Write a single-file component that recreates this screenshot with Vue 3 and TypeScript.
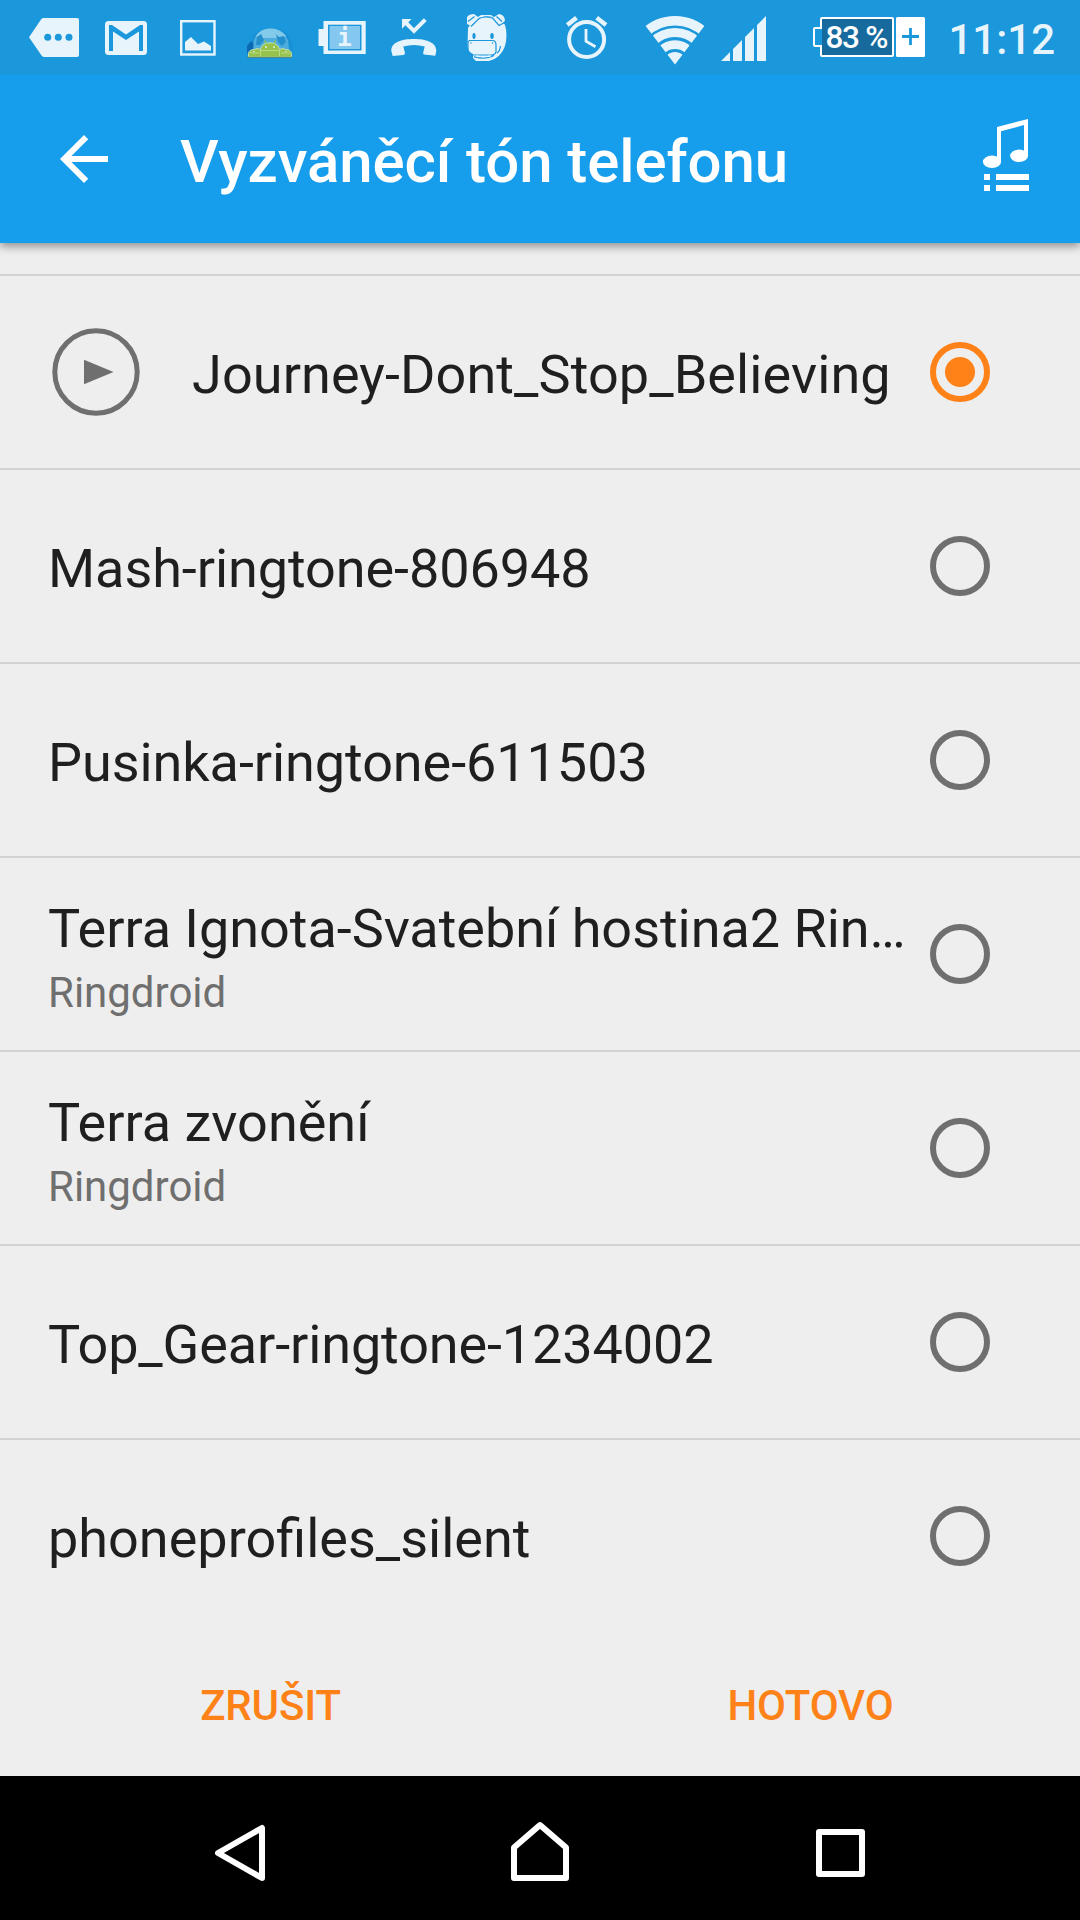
<script setup lang="ts">
import { ref } from 'vue'

interface Ringtone {
  title: string
  artist?: string
  tracking: number
}

const ringtones: Ringtone[] = [
  { title: 'Journey-Dont_Stop_Believing', tracking: 0.09 },
  { title: 'Mash-ringtone-806948', tracking: -0.07 },
  { title: 'Pusinka-ringtone-611503', tracking: -0.07 },
  { title: 'Terra Ignota-Svatební hostina2 Rin…', artist: 'Ringdroid', tracking: -0.04 },
  { title: 'Terra zvonění', artist: 'Ringdroid', tracking: 0 },
  { title: 'Top_Gear-ringtone-1234002', tracking: -0.12 },
  { title: 'phoneprofiles_silent', tracking: 0 },
]

const selected = ref(0)
</script>

<template>
  <div class="screen">
    <div class="status">
      <div class="tray">
        <svg width="72" height="75" viewBox="20 0 72 75">
          <path class="ink" d="M29 37.3 41 19.4Q42 18 44 18H77Q79 18 79 20V55Q79 57 77 57H44Q42.500 57 41.500 55.600Z" />
          <g class="bg"><circle cx="47.700" cy="37.300" r="3.500" /><circle cx="58.300" cy="37.300" r="3.500" /><circle cx="69" cy="37.300" r="3.500" /></g>
        </svg>
        <svg width="68" height="75" viewBox="92 0 68 75">
          <rect class="ink" x="105" y="21" width="42" height="34" rx="3.500" />
          <path class="bg" d="M109 51V25H112L126 34.500 140 25H143V51H139V31.500L126 40 113 31.500V51Z" />
        </svg>
        <svg width="75" height="75" viewBox="160 0 75 75">
          <rect class="line" x="181.200" y="21.200" width="33.300" height="33.300" stroke-width="2.400" />
          <path class="ink" d="M185 50.500V42L191 37 198 44 204 41.500 211 46V50.500Z" />
        </svg>
        <svg width="70" height="75" viewBox="235 0 70 75">
          <path d="M247 56V46L252 40 254 34 260 31H283L289 36 293 44V56Z" fill="#1787cb" opacity="0.45" />
          <path d="M247 53V46L251 41 256 47 250 54Z" fill="#0b69b3" />
          <path d="M254 40Q258 28.500 270.500 28.500T288 40L289 50H253Z" fill="#4dadde" />
          <path d="M256 36Q261 28.500 270.500 28.500T286 36L283 38H259Z" fill="#83caea" />
          <path d="M257 37 261 34 264 40 260 45H256ZM276 34 279 37 284 36 286 42 282 46 278 42Z" fill="#238fcd" />
          <path d="M248.500 57V53.500Q249 49.500 254.500 49.500 257 47.500 260.500 49.500 262 42.800 270 42.800T279.500 49.500Q283 47.500 285.500 49.500 291 49.500 291.500 53.500V57Z" fill="#96c34d" stroke="#cfe5b3" stroke-width="0.900" />
          <path d="M260.500 57V50M279.500 57V50M261 50.500H279M250 53H259M281 53H290" fill="none" stroke="#c5df95" stroke-width="0.800" />
          <path d="M264.500 40.500 266.300 43.500M275.700 40.500 273.900 43.500" stroke="#96c34d" stroke-width="1.300" />
          <g fill="#edf6df"><circle cx="266" cy="47" r="0.900" /><circle cx="274" cy="47" r="0.900" /><circle cx="254" cy="51.500" r="0.700" /><circle cx="286" cy="51.500" r="0.700" /></g>
          <path d="M247 57.300H292" stroke="#4d7d61" stroke-width="1" />
        </svg>
        <svg width="75" height="75" viewBox="305 0 75 75">
          <path class="ink" d="M323.500 21H365.700V54H323.500V46H318.500V29H323.500Z" />
          <rect class="bg" x="328" y="24.700" width="33.500" height="25.800" />
          <rect x="329.500" y="26" width="30.500" height="23" fill="#84c7ef" />
          <text class="info" x="344.500" y="45.800" text-anchor="middle">i</text>
        </svg>
        <svg width="70" height="75" viewBox="380 0 70 75">
          <path class="line" d="M405 22 414 31 425.300 19.700" stroke-width="4" />
          <path class="ink" d="M402 19H411.500L402 28.700Z" />
          <path class="ink" d="M391.300 51C391 42 402 39 413.800 39S436.500 42 436.300 51L435.300 55.800 424 54.500Q422.800 54 423.200 52.500L424.700 46.500Q414 43.500 403.300 46.500L405 53Q405 54.500 403.500 55L392.700 56Z" />
        </svg>
        <svg width="70" height="75" viewBox="450 0 70 75">
          <path class="ink" d="M468 28Q474 17 486 17 500 17 505 25 508 35 505 46 501 58 489 61H476L473 58V54Q468 52 467.500 46Z" />
          <path class="ink" d="M467 17Q469 14 474 14L478 17 481 15H491L494 17 499 14Q505 15 505 21L499 25 493 17Q486 15 479 18L471 26 467 24Z" />
          <g class="cut">
            <path d="M468 21.500 474.500 16.500M471 26.500 479 18.500Q486 15.500 493 18.500L499 25.500 505.500 22M496.500 16.500 502 21.500" />
            <path d="M469.500 40.500H493Q496 41 496 45V52Q495 55 491 55H472Q468.500 54 468 50V43Q468 41 469.500 40.500M497 53Q500 51 500.500 46M474 56.800Q486 60 494 55.500" />
          </g>
          <g class="bg"><ellipse cx="474" cy="36" rx="1.600" ry="3" /><ellipse cx="492" cy="36" rx="1.800" ry="3" /><circle cx="471" cy="43" r="0.700" /><circle cx="492.500" cy="43" r="0.700" /></g>
          <path class="ink" d="M476 55.500H479L477.500 57.500ZM482 56H485L483.500 58ZM488 55.500H491L489.500 57.500Z" />
        </svg>
      </div>
      <div class="system">
        <svg width="80" height="75" viewBox="555 0 80 75">
          <circle class="line" cx="586.600" cy="39.500" r="17.500" stroke-width="4" />
          <path class="line" d="M586 29V41.300L595.500 46.700" stroke-width="2.800" />
          <path class="line" d="M567.300 25 576.500 17.700M596.700 17.700 606 25" stroke-width="4.500" />
        </svg>
        <svg width="80" height="75" viewBox="635 0 80 75">
          <defs><clipPath id="wifi-fan"><path d="M675 64.500 637.200 15V0H712.800V15Z" /></clipPath></defs>
          <g clip-path="url(#wifi-fan)">
            <circle class="line" cx="675" cy="64" r="43.200" stroke-width="9.500" />
            <circle class="line" cx="675" cy="64" r="31.500" stroke-width="9" />
            <circle class="line" cx="675" cy="64" r="19.400" stroke-width="8.600" />
            <circle class="ink" cx="675" cy="64" r="12" />
          </g>
        </svg>
        <svg width="90" height="75" viewBox="715 0 90 75">
          <path class="ink" d="M721 61 730 52V61ZM733 61V49L742 40V61ZM745 61V37L754 28V61ZM757 61V25L766 16V61Z" />
        </svg>
        <svg width="130" height="75" viewBox="805 0 130 75">
          <path d="M822 18H892Q893 18 893 19V55Q893 56 892 56H822Q821 56 821 55V46H815Q814 46 814 45V29Q814 28 815 28H821V19Q821 18 822 18Z" fill="#1b97dc" stroke="#fff" stroke-width="2" />
          <rect x="822" y="19" width="70" height="36" fill="#166a9e" />
          <rect x="896" y="17" width="29" height="40" rx="1.500" fill="#fff" />
          <path d="M902 36.500H919M910.500 28V45" stroke="#1b97dc" stroke-width="2.800" />
          <text class="percent" x="857" y="48" text-anchor="middle" textLength="63">83 %</text>
        </svg>
        <span class="clock">11:12</span>
      </div>
    </div>

    <header class="toolbar">
      <svg class="back" width="72" height="72" viewBox="0 0 24 24">
        <path fill="#fff" d="M20 11H7.830l5.590-5.590L12 4l-8 8 8 8 1.410-1.410L7.830 13H20z" />
      </svg>
      <h1>Vyzváněcí tón telefonu</h1>
      <svg width="48" height="74" viewBox="982 118 48 74" fill="#fff">
        <path d="M997 127 1028 119V156H1024V125L1001 131.300V162H997Z" />
        <ellipse cx="992" cy="161.800" rx="9.100" ry="6.200" />
        <ellipse cx="1019.100" cy="155.800" rx="9" ry="6.200" />
        <path d="M984 174H990V180H984ZM996 174H1029V180H996ZM984 185H990V191H984ZM996 185H1029V191H996Z" />
      </svg>
    </header>

    <main class="list">
      <div class="previous"></div>
      <div v-for="(tone, i) in ringtones" :key="tone.title" class="row" @click="selected = i">
        <svg v-if="selected === i" class="play" width="90" height="90" viewBox="0 0 90 90">
          <circle cx="45" cy="45" r="41.200" fill="none" stroke="#6f6f6f" stroke-width="5" />
          <path d="M33 32.700 62.500 45 33 57.200Z" fill="#6f6f6f" />
        </svg>
        <div class="label">
          <div class="title" :style="{ letterSpacing: `${tone.tracking}px` }">{{ tone.title }}</div>
          <div v-if="tone.artist" class="artist">{{ tone.artist }}</div>
        </div>
        <span class="radio" :class="{ on: selected === i }"></span>
      </div>
    </main>

    <footer class="actions">
      <button type="button">ZRUŠIT</button>
      <button type="button">HOTOVO</button>
    </footer>

    <nav class="navbar">
      <svg width="60" height="66" viewBox="210 1820 60 66"><path d="M218 1853 262 1828V1878Z" /></svg>
      <svg width="66" height="66" viewBox="507 1820 66 66"><path d="M514 1847.500 540 1825 566 1847.500V1878H514Z" /></svg>
      <svg width="60" height="66" viewBox="810 1820 60 66"><path d="M819 1832H862V1874H819Z" /></svg>
    </nav>
  </div>
</template>

<style>
body {
  margin: 0;
}
</style>

<style scoped>
.screen {
  width: 1080px;
  height: 1920px;
  display: flex;
  flex-direction: column;
  overflow: hidden;
  background: #eee;
  color: #1f1f1f;
  font-family: Roboto, "Noto Sans", sans-serif;
}
svg {
  display: block;
  flex: none;
}
.status {
  position: relative;
  z-index: 1;
  height: 75px;
  flex: none;
  display: flex;
  justify-content: space-between;
  box-sizing: border-box;
  padding: 0 25px 0 20px;
  background: #1b97dc;
}
.tray,
.system {
  display: flex;
}
.ink {
  fill: #e8f4fc;
}
.bg {
  fill: #1b97dc;
}
.line {
  fill: none;
  stroke: #e8f4fc;
}
.cut {
  fill: none;
  stroke: #1b97dc;
  stroke-width: 1.2;
}
.info {
  font: bold 24px "DejaVu Sans Mono", monospace;
  fill: #e8f4fc;
}
.percent {
  font-size: 31.5px;
  font-weight: 500;
  fill: #fff;
}
.clock {
  width: 120px;
  text-align: right;
  font-size: 42px;
  font-weight: 500;
  line-height: 79px;
  color: #e8f4fc;
}
.toolbar {
  position: relative;
  height: 168px;
  flex: none;
  display: flex;
  align-items: center;
  box-sizing: border-box;
  padding: 0 50px 8px 48px;
  background: #169deb;
  box-shadow: 0 4px 8px rgba(0, 0, 0, 0.36);
}
.back {
  margin-top: 8px;
}
h1 {
  flex: 1;
  margin: 13px 0 0 60px;
  font-size: 60px;
  line-height: 70px;
  font-weight: 500;
  letter-spacing: -0.1px;
  color: #fff;
}
.previous {
  height: 31px;
}
.row {
  height: 194px;
  box-sizing: border-box;
  display: flex;
  align-items: center;
  padding: 0 90px 0 48px;
  border-top: 2px solid #d2d2d2;
}
.play {
  margin: 0 51px 0 3px;
}
.label {
  flex: 1;
  min-width: 0;
  padding-top: 6px;
  margin-right: 12px;
}
.title {
  font-size: 54px;
  line-height: 64px;
  white-space: nowrap;
}
.artist {
  margin-top: 7px;
  font-size: 42px;
  line-height: 50px;
  color: #6f6f6f;
}
.radio {
  width: 60px;
  height: 60px;
  flex: none;
  box-sizing: border-box;
  border: 6px solid #6f6f6f;
  border-radius: 50%;
}
.radio.on {
  border-color: #ff8218;
  background: radial-gradient(circle, #ff8218 14.5px, transparent 15.5px);
}
.actions {
  height: 144px;
  flex: none;
  display: flex;
}
button {
  flex: 1;
  padding: 3px 0 0 1px;
  border: 0;
  background: none;
  font: 500 42px Roboto, "Noto Sans", sans-serif;
  letter-spacing: -0.15px;
  color: #ff8218;
}
.navbar {
  height: 144px;
  flex: none;
  display: flex;
  align-items: center;
  justify-content: space-between;
  box-sizing: border-box;
  padding: 10px 210px 0;
  background: #000;
}
.navbar path {
  fill: none;
  stroke: #fff;
  stroke-width: 6;
  stroke-linejoin: round;
}
</style>
